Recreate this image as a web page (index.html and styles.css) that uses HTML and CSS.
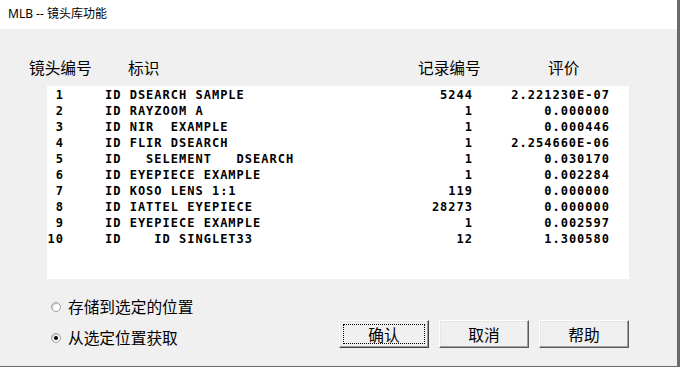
FILE: index.html
```html
<!DOCTYPE html>
<html>
	<head>
		<meta charset="utf-8">
		<link rel="stylesheet" href="styles.css">
		<title>MLB -- 镜头库功能</title>
	</head>
	<body>
		<div class="window">
			<div class="titlebar">MLB -- 镜头库功能</div>

			<div class="main">
				<div class="headers">
					<span>镜头编号</span>
					<span>标识</span>
					<span>记录编号</span>
					<span>评价</span>
				</div>

				<div class="listbox">
					<div class="row"><span class="num">1</span><span class="name">ID DSEARCH SAMPLE</span><span class="rec">5244</span><span class="val">2.221230E-07</span></div>
					<div class="row"><span class="num">2</span><span class="name">ID RAYZOOM A</span><span class="rec">1</span><span class="val">0.000000</span></div>
					<div class="row"><span class="num">3</span><span class="name">ID NIR  EXAMPLE</span><span class="rec">1</span><span class="val">0.000446</span></div>
					<div class="row"><span class="num">4</span><span class="name">ID FLIR DSEARCH</span><span class="rec">1</span><span class="val">2.254660E-06</span></div>
					<div class="row"><span class="num">5</span><span class="name">ID   SELEMENT   DSEARCH</span><span class="rec">1</span><span class="val">0.030170</span></div>
					<div class="row"><span class="num">6</span><span class="name">ID EYEPIECE EXAMPLE</span><span class="rec">1</span><span class="val">0.002284</span></div>
					<div class="row"><span class="num">7</span><span class="name">ID KOSO LENS 1:1</span><span class="rec">119</span><span class="val">0.000000</span></div>
					<div class="row"><span class="num">8</span><span class="name">ID IATTEL EYEPIECE</span><span class="rec">28273</span><span class="val">0.000000</span></div>
					<div class="row"><span class="num">9</span><span class="name">ID EYEPIECE EXAMPLE</span><span class="rec">1</span><span class="val">0.002597</span></div>
					<div class="row"><span class="num">10</span><span class="name">ID    ID SINGLET33</span><span class="rec">12</span><span class="val">1.300580</span></div>
				</div>

				<div class="bottom">
					<div class="radios">
						<label class="radio"><span class="dot"></span>存储到选定的位置</label>
						<label class="radio checked"><span class="dot"></span>从选定位置获取</label>
					</div>
					<div class="buttons">
						<div class="btn default"><span class="focus">确认</span></div>
						<div class="btn">取消</div>
						<div class="btn">帮助</div>
					</div>
				</div>
			</div>
		</div>
	</body>
</html>
```

FILE: styles.css
```css
html, body {
  margin: 0;
  padding: 0;
  background: #fff;
  font-family: "Noto Sans", "Noto Sans CJK SC", sans-serif;
}

/* dialog frame */
.window {
  width: 680px;
  height: 367px;
  box-sizing: border-box;
  border-right: 3px solid #6a6a6a;
  border-bottom: 1px solid #6a6a6a;
  display: flex;
  flex-direction: column;
}

.titlebar {
  height: 29px;
  line-height: 28px;
  padding-left: 8px;
  font-size: 12px;
  color: #000;
  background: #fff;
}

.main {
  flex: 1;
  background: #f0f0f0;
  padding-top: 29px;
}

/* column headings */
.headers {
  display: grid;
  grid-template-columns: 99px 290px 130px auto;
  padding-left: 29px;
  height: 20px;
  line-height: 20px;
  font-family: "Noto Sans CJK SC", sans-serif;
  font-size: 15.7px;
  color: #000;
}

/* list box */
.listbox {
  margin: 8px 0 0 47px;
  width: 582px;
  height: 193px;
  box-sizing: border-box;
  padding: 1px 20px 0 0;
  background: #fff;
  font-family: "DejaVu Sans Mono", monospace;
  font-weight: bold;
  font-size: 12px;
  letter-spacing: 1px;
  color: #000;
}

.row {
  display: grid;
  grid-template-columns: 58px 1fr 80px 137px;
  height: 16px;
  line-height: 16px;
  white-space: pre;
}

.num {
  text-align: right;
  padding-right: 41px;
}

.rec, .val {
  text-align: right;
  margin-right: -1px;
}

/* radios and buttons */
.bottom {
  display: flex;
  justify-content: space-between;
  margin-left: 51px;
  width: 578px;
}

.radios {
  padding-top: 12px;
  display: flex;
  flex-direction: column;
}

.radio {
  display: flex;
  align-items: center;
  height: 31px;
  font-family: "Noto Sans CJK SC", sans-serif;
  font-size: 15.7px;
  color: #000;
}

.dot {
  width: 8px;
  height: 8px;
  margin-right: 7px;
  border-radius: 50%;
  border: 1px solid #a0a0a0;
  background: #fff;
  box-shadow: inset 1px 1px 1px #c8c8c8;
  display: flex;
  align-items: center;
  justify-content: center;
}

.radio.checked .dot::after {
  content: "";
  width: 4px;
  height: 4px;
  border-radius: 50%;
  background: #000;
}

.buttons {
  display: flex;
  gap: 10px;
  margin-top: 41px;
}

.btn {
  width: 90px;
  height: 28px;
  box-sizing: border-box;
  display: flex;
  align-items: center;
  justify-content: center;
  border: 1px solid;
  border-color: #fff #5a5a5a #5a5a5a #fff;
  box-shadow: inset -1px -1px #a0a0a0, inset 1px 1px #e6e6e6;
  background: #f0f0f0;
  font-family: "Noto Sans CJK SC", sans-serif;
  font-size: 15.7px;
  color: #000;
}

.btn.default {
  border-color: #fff #404040 #404040 #fff;
  padding: 3px;
}

.focus {
  flex: 1;
  align-self: stretch;
  display: flex;
  align-items: center;
  justify-content: center;
  border: 1px dotted #000;
}
```
